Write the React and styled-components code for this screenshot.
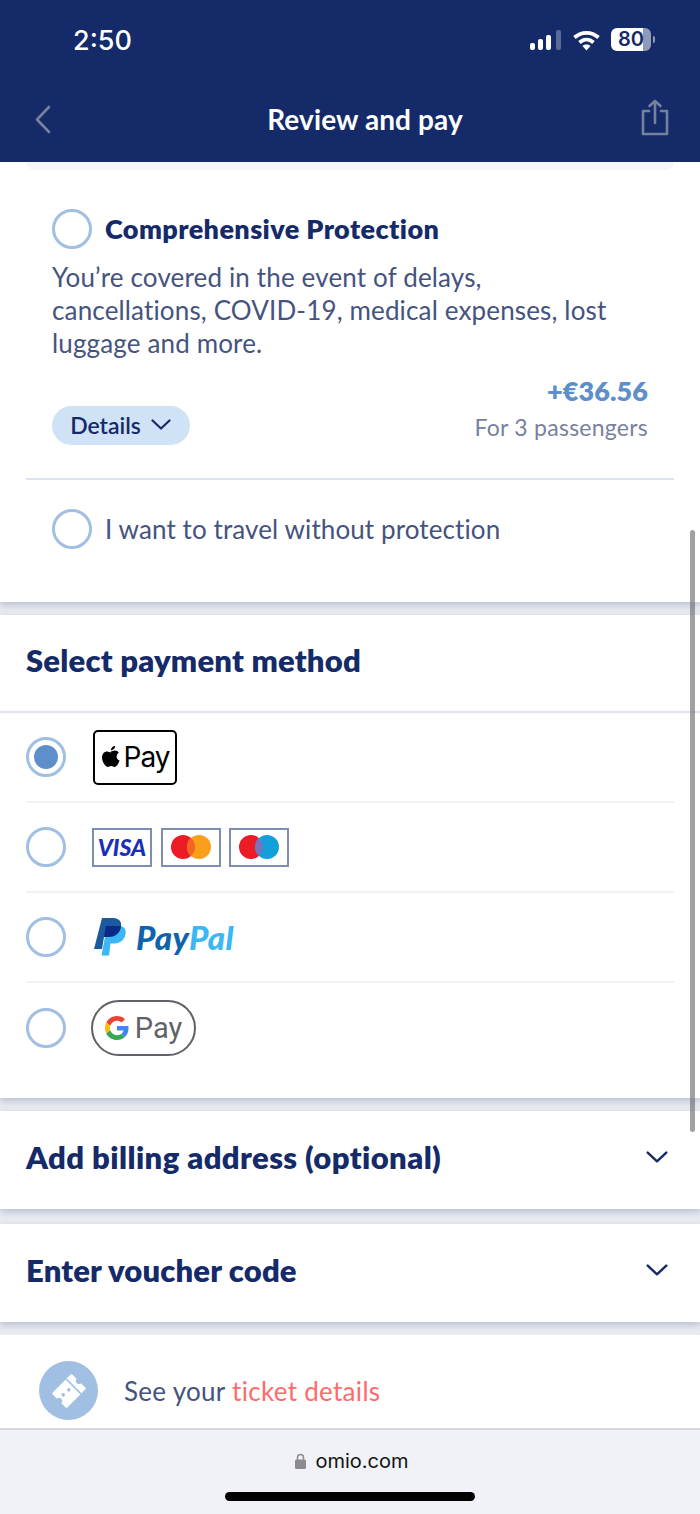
import React from "react";
import styled, { createGlobalStyle } from "styled-components";

const Global = createGlobalStyle`
  html, body { margin: 0; padding: 0; background: #fff; }
  * { box-sizing: border-box; }
  body { font-family: "Lato", "Liberation Sans", sans-serif; }
`;

const Page = styled.div`
  position: relative;
  width: 700px;
  height: 1514px;
  overflow: hidden;
  display: flex;
  flex-direction: column;
  background: #e9ebf1;
`;
const Header = styled.header`
  height: 162px;
  flex: none;
  background: #152a69;
  color: #fff;
  display: flex;
  flex-direction: column;
  position: relative;
  z-index: 1;
`;
const StatusBar = styled.div`
  height: 80px;
  display: flex;
  align-items: center;
  justify-content: space-between;
  padding: 0 49px 0 73px;
`;
const Clock = styled.span`
  font-family: "Inter", sans-serif;
  font-size: 27px;
  font-weight: 500;
`;
const StatusIcons = styled.div`
  display: flex;
  align-items: center;
`;
const SignalSlot = styled.span`
  display: flex;
  margin-right: 12px;
`;
const WifiSlot = styled.span`
  display: flex;
  margin-right: 11px;
`;
const Battery = styled.div`
  position: relative;
  width: 40px;
  height: 23px;
  margin-top: -1px;
  border-radius: 6px;
  background: linear-gradient(90deg, #fff 0 80%, #8f9ab9 80% 100%);
  color: #152a69;
  font-family: "Inter", sans-serif;
  font-size: 20px;
  font-weight: 600;
  line-height: 23px;
  text-align: center;
  &::after {
    content: "";
    position: absolute;
    right: -4px;
    top: 8px;
    width: 2px;
    height: 7px;
    border-radius: 0 2px 2px 0;
    background: #8f9ab9;
  }
`;
const NavBar = styled.div`
  height: 82px;
  display: flex;
  align-items: center;
  justify-content: space-between;
  padding: 0 31px 4px 33px;
`;
const NavTitle = styled.h1`
  margin: 0 0 0 38px;
  font-size: 28px;
  line-height: 30px;
  font-weight: 700;
  letter-spacing: 0.1px;
  color: #fff;
`;
const ShareSlot = styled.span`
  display: flex;
  margin-top: -3px;
`;
const Scroll = styled.main`
  flex: 1;
  display: flex;
  flex-direction: column;
`;
const Card = styled.section`
  background: #fff;
  height: ${(p) => p.$h}px;
  flex: none;
  margin-bottom: ${(p) => p.$gap || 0}px;
  box-shadow: 0 3px 7px rgba(60, 75, 120, 0.28);
`;
const ProtectCard = styled(Card)`
  padding: 0 26px;
  display: flex;
  flex-direction: column;
`;
const PrevCardEdge = styled.div`
  height: 8px;
  background: #f5f6f8;
  border-radius: 0 0 12px 12px;
  flex: none;
`;
const Radio = styled.span`
  width: 40px;
  height: 40px;
  flex: none;
  border-radius: 50%;
  border: 3px solid #a0bfe2;
  background: #fff;
  display: flex;
  align-items: center;
  justify-content: center;
  &::after {
    content: "";
    display: ${(p) => (p.$on ? "block" : "none")};
    width: 24px;
    height: 24px;
    border-radius: 50%;
    background: #5e8fca;
  }
`;
const OptionHead = styled.div`
  display: flex;
  align-items: center;
  gap: 13px;
  margin: 39px 0 0 26px;
`;
const OptionTitle = styled.h2`
  margin: 0;
  font-size: 27px;
  line-height: 40px;
  font-weight: 800;
  letter-spacing: 0.4px;
  color: #152a69;
`;
const Desc = styled.p`
  margin: 12px 0 0 26px;
  width: 570px;
  font-size: 26px;
  line-height: 33px;
  letter-spacing: 0.15px;
  color: #45537f;
`;
const PriceRow = styled.div`
  display: flex;
  justify-content: space-between;
  align-items: flex-start;
  margin: 15px 0 0 26px;
  padding-right: 26px;
`;
const DetailsPill = styled.button`
  margin-top: 31px;
  width: 138px;
  height: 39px;
  border: 0;
  border-radius: 20px;
  background: #cfe2f6;
  color: #152a69;
  font: 600 23px "Lato", sans-serif;
  display: flex;
  align-items: center;
  justify-content: center;
  gap: 10px;
  padding: 0 1px 2px 0;
`;
const PriceCol = styled.div`
  display: flex;
  flex-direction: column;
  align-items: flex-end;
`;
const Price = styled.span`
  font-size: 27px;
  line-height: 32px;
  font-weight: 800;
  letter-spacing: 0.1px;
  color: #5e8fca;
`;
const PriceNote = styled.span`
  font-size: 23px;
  line-height: 28px;
  margin-top: 6px;
  letter-spacing: 0.25px;
  color: #77819f;
`;
const Rule = styled.hr`
  margin: 33px 0 0;
  border: 0;
  border-top: 2px solid #dfe3ef;
`;
const NoProtect = styled.div`
  display: flex;
  align-items: center;
  gap: 13px;
  margin: 29px 0 0 26px;
  font-size: 26px;
  line-height: 40px;
  letter-spacing: 0.1px;
  color: #45537f;
`;
const SectionTitle = styled.h2`
  margin: 0;
  height: 98px;
  padding: 0 26px 6px;
  display: flex;
  align-items: center;
  font-size: 31px;
  font-weight: 800;
  letter-spacing: 0.2px;
  color: #152a69;
  border-bottom: 2px solid #dfe3ef;
`;
const PayRow = styled.div`
  height: 90px;
  margin: 0 26px;
  display: flex;
  align-items: center;
  gap: 27px;
  border-bottom: ${(p) => (p.$last ? "0" : "2px solid #f1f2f6")};
`;
const Logos = styled.div`
  display: flex;
  gap: 8.5px;
  align-items: center;
  margin-left: -1px;
`;
const ApplePay = styled.div`
  width: 84px;
  height: 55px;
  border: 2px solid #000;
  border-radius: 5px;
  display: flex;
  align-items: center;
  justify-content: center;
  gap: 3px;
  font: 400 28px "Inter", sans-serif;
  letter-spacing: -1px;
  color: #000;
`;
const CardLogo = styled.div`
  width: 60px;
  height: 39px;
  border: 2px solid #7f8db5;
  background: #fff;
  display: flex;
  align-items: center;
  justify-content: center;
`;
const VisaText = styled.span`
  font: italic 900 23px "Lato", sans-serif;
  color: #1a2fb5;
`;
const PayPalWord = styled.span`
  font: italic 900 33px "Lato", sans-serif;
  letter-spacing: 0.4px;
  color: ${(p) => p.$c};
`;
const PayPalWrap = styled.div`
  display: flex;
  align-items: center;
  gap: 10px;
  margin-left: 1px;
`;
const GPay = styled.div`
  width: 105px;
  height: 56px;
  margin-left: -2px;
  border: 2px solid #5f6368;
  border-radius: 28px;
  display: flex;
  align-items: center;
  justify-content: center;
  gap: 6px;
  font: 400 29px "Roboto", sans-serif;
  color: #5f6368;
`;
const AccordionCard = styled(Card)`
  display: flex;
  align-items: center;
  justify-content: space-between;
  padding: 0 32px 7px 26px;
`;
const AccordionTitle = styled.h2`
  margin: 0;
  font-size: 31px;
  font-weight: 800;
  letter-spacing: ${(p) => p.$ls || 0.3}px;
  color: #152a69;
`;
const TicketRow = styled.div`
  height: 93px;
  flex: none;
  background: #fff;
  padding: 18px 0 0 39px;
  display: flex;
  align-items: center;
  gap: 26px;
  font-size: 26px;
  letter-spacing: 0.3px;
  color: #45537f;
`;
const TicketBadge = styled.span`
  width: 59px;
  height: 59px;
  border-radius: 50%;
  background: #a0bfe2;
  display: flex;
  align-items: center;
  justify-content: center;
`;
const Coral = styled.span`
  color: #ff6b6b;
`;
const BrowserBar = styled.footer`
  height: 86px;
  flex: none;
  background: #f1f2f7;
  border-top: 2px solid #d8d9df;
  display: flex;
  flex-direction: column;
  align-items: center;
`;
const UrlLine = styled.div`
  margin-top: 19px;
  margin-left: 4px;
  display: flex;
  align-items: center;
  gap: 9px;
  font: 400 20px "Inter", sans-serif;
  color: #111;
`;
const HomeBar = styled.div`
  margin-top: 19px;
  width: 250px;
  height: 9px;
  border-radius: 5px;
  background: #000;
`;
const ScrollThumb = styled.div`
  position: absolute;
  left: 690px;
  top: 530px;
  width: 5px;
  height: 602px;
  border-radius: 3px;
  background: rgba(110, 110, 115, 0.65);
`;

const Chevron = ({ w = 20, h = 11, c = "#152a69" }) => (
  <svg width={w} height={h} viewBox="0 0 20 11" fill="none">
    <path d="M1.5 1.5 10 9.5l8.5-8" stroke={c} strokeWidth="2.2" strokeLinecap="round" strokeLinejoin="round" />
  </svg>
);

const AppleGlyph = () => (
  <svg width="20" height="24" viewBox="0 0 20 24" fill="#000">
    <path d="M14 1c.2 2-1.800 4.300-4 4.200C9.700 3.100 11.900 1.100 14 1z" />
    <path d="M10 6.500c1 0 2.300-1 4-.9 1.500.1 3 .8 3.800 2.100-3.300 2-2.700 6.500.8 7.900-.7 2-2.800 6.400-4.900 6.400-1.300 0-1.900-.9-3.500-.9s-2.300.9-3.500.9c-2.200 0-5.700-5.300-5.700-9.500 0-4 2.600-6 5-6 1.600 0 2.900 1 4 1z" />
  </svg>
);

const Discs = ({ a, b, m }) => (
  <svg width="40" height="24" viewBox="0 0 40 24">
    <circle cx="12" cy="12" r="12" fill={a} />
    <circle cx="28" cy="12" r="12" fill={b} />
    <path d="M20 3a12 12 0 0 1 0 18 12 12 0 0 1 0-18z" fill={m} />
  </svg>
);

const PayPalMark = () => (
  <svg width="32" height="38" viewBox="0 0 32 38">
    <path d="M8 0h11c6 0 9 3.500 8 9-1 6.500-6 10-12 10h-5L8 31H0z" fill="#1b5a9c" />
    <path d="M13 8h12c4.500 0 7.500 3 6.500 8-1 6-5.500 9.500-11 9.500h-4L15 37.500H7.500z" fill="#3bb7f5" />
    <path d="M12 8h13c1 0 1.600.1 2 .2C26.500 14.500 21.500 19 15 19h-5z" fill="#0b2a88" />
  </svg>
);

const GLogo = () => (
  <svg width="24" height="24" viewBox="0 0 48 48">
    <path fill="#EA4335" d="M24 9.500c3.500 0 6.700 1.300 9.200 3.600l6.800-6.800C35.800 2.400 30.300 0 24 0 14.600 0 6.500 5.400 2.600 13.200l8 6.200C12.400 13.700 17.700 9.500 24 9.500z" />
    <path fill="#4285F4" d="M47 24.500c0-1.600-.1-3.100-.4-4.500H24v9h13c-.6 3-2.300 5.500-4.800 7.200l7.700 6C44.400 38 47 31.800 47 24.500z" />
    <path fill="#FBBC05" d="M10.500 28.600c-.5-1.400-.8-3-.8-4.600s.3-3.200.8-4.600l-8-6.200C.9 16.500 0 20.100 0 24s.9 7.500 2.600 10.800z" />
    <path fill="#34A853" d="M24 48c6.500 0 11.900-2.100 15.900-5.800l-7.700-6c-2.200 1.400-4.900 2.300-8.200 2.300-6.300 0-11.600-4.200-13.500-9.900l-8 6.200C6.500 42.600 14.600 48 24 48z" />
  </svg>
);

const TicketIcon = () => (
  <svg width="40" height="40" viewBox="-2 -2 40 40">
    <g transform="rotate(45 18 18)">
      <path
        fill="#fff"
        d="M9 4h6a3 3 0 0 0 6 0h6a1.500 1.500 0 0 1 1.500 1.500v25a1.500 1.500 0 0 1-1.500 1.500h-6a3 3 0 0 0-6 0H9a1.500 1.500 0 0 1-1.500-1.500v-25A1.500 1.500 0 0 1 9 4z"
      />
      <path d="M7.500 11.500h21" stroke="#a0bfe2" strokeWidth="1.600" />
      <circle cx="17" cy="17.300" r="1.800" fill="#a0bfe2" />
      <circle cx="16.600" cy="24.800" r="1.800" fill="#a0bfe2" />
    </g>
  </svg>
);

export default function App() {
  return (
    <Page>
      <Global />
      <Header>
        <StatusBar>
          <Clock>2:50</Clock>
          <StatusIcons>
            <SignalSlot>
              <svg width="31" height="22" viewBox="0 0 31 22">
                <rect x="0" y="14" width="5" height="7" rx="2" fill="#fff" />
                <rect x="8" y="10" width="5" height="11" rx="2" fill="#fff" />
                <rect x="16" y="6" width="5" height="15" rx="2" fill="#fff" />
                <rect x="26" y="1" width="5" height="20" rx="2" fill="#5a6a98" />
              </svg>
            </SignalSlot>
            <WifiSlot>
              <svg width="27" height="21" viewBox="0 0 26 21" fill="none" stroke="#fff" strokeWidth="3.800">
                <path d="M1 7.500c7-6.300 17-6.300 24 0" />
                <path d="M6 12.500c4.200-3.800 9.800-3.800 14 0" />
                <path d="M13 20.500 9 16c2.300-1.900 5.700-1.900 8 0z" fill="#fff" stroke="none" />
              </svg>
            </WifiSlot>
            <Battery>80</Battery>
          </StatusIcons>
        </StatusBar>
        <NavBar>
          <svg width="18" height="30" viewBox="0 0 18 30" fill="none">
            <path d="M16 3 4 15.500 16 28" stroke="#75829f" strokeWidth="2.600" strokeLinecap="round" strokeLinejoin="round" />
          </svg>
          <NavTitle>Review and pay</NavTitle>
          <ShareSlot>
            <svg width="28" height="37" viewBox="0 0 28 37" fill="none" stroke="#75829f" strokeWidth="2.600" strokeLinecap="round" strokeLinejoin="round">
              <path d="M8 12H2v23h24V12h-6" />
              <path d="M14 24V2M8.500 7 14 2l5.500 5" />
            </svg>
          </ShareSlot>
        </NavBar>
      </Header>
      <Scroll>
        <ProtectCard $h={440} $gap={13}>
          <PrevCardEdge />
          <OptionHead>
            <Radio />
            <OptionTitle>Comprehensive Protection</OptionTitle>
          </OptionHead>
          <Desc>You’re covered in the event of delays, cancellations, COVID-19, medical expenses, lost luggage and more.</Desc>
          <PriceRow>
            <DetailsPill>
              Details <Chevron />
            </DetailsPill>
            <PriceCol>
              <Price>+€36.56</Price>
              <PriceNote>For 3 passengers</PriceNote>
            </PriceCol>
          </PriceRow>
          <Rule />
          <NoProtect>
            <Radio />
            I want to travel without protection
          </NoProtect>
        </ProtectCard>
        <Card $h={483} $gap={13}>
          <SectionTitle>Select payment method</SectionTitle>
          <PayRow>
            <Radio $on />
            <ApplePay>
              <AppleGlyph />
              Pay
            </ApplePay>
          </PayRow>
          <PayRow>
            <Radio />
            <Logos>
              <CardLogo>
                <VisaText>VISA</VisaText>
              </CardLogo>
              <CardLogo>
                <Discs a="#eb1c26" b="#f99f1b" m="#f26522" />
              </CardLogo>
              <CardLogo>
                <Discs a="#eb1c26" b="#12a0da" m="#7673c0" />
              </CardLogo>
            </Logos>
          </PayRow>
          <PayRow>
            <Radio />
            <PayPalWrap>
              <PayPalMark />
              <span>
                <PayPalWord $c="#0f63ac">Pay</PayPalWord>
                <PayPalWord $c="#3bb7f5">Pal</PayPalWord>
              </span>
            </PayPalWrap>
          </PayRow>
          <PayRow $last>
            <Radio />
            <GPay>
              <GLogo />
              Pay
            </GPay>
          </PayRow>
        </Card>
        <AccordionCard $h={98} $gap={15}>
          <AccordionTitle $ls={0.4}>Add billing address (optional)</AccordionTitle>
          <Chevron w={22} h={12} />
        </AccordionCard>
        <AccordionCard $h={98} $gap={13}>
          <AccordionTitle $ls={0.15}>Enter voucher code</AccordionTitle>
          <Chevron w={22} h={12} />
        </AccordionCard>
        <TicketRow>
          <TicketBadge>
            <TicketIcon />
          </TicketBadge>
          <span>
            See your <Coral>ticket details</Coral>
          </span>
        </TicketRow>
      </Scroll>
      <BrowserBar>
        <UrlLine>
          <svg width="11" height="16" viewBox="0 0 11 16">
            <path d="M2.500 7V4.500a3 3 0 0 1 6 0V7" fill="none" stroke="#8a8a8f" strokeWidth="1.500" />
            <rect x="0" y="6.500" width="11" height="9.500" rx="1.500" fill="#8a8a8f" />
          </svg>
          omio.com
        </UrlLine>
        <HomeBar />
      </BrowserBar>
      <ScrollThumb />
    </Page>
  );
}
